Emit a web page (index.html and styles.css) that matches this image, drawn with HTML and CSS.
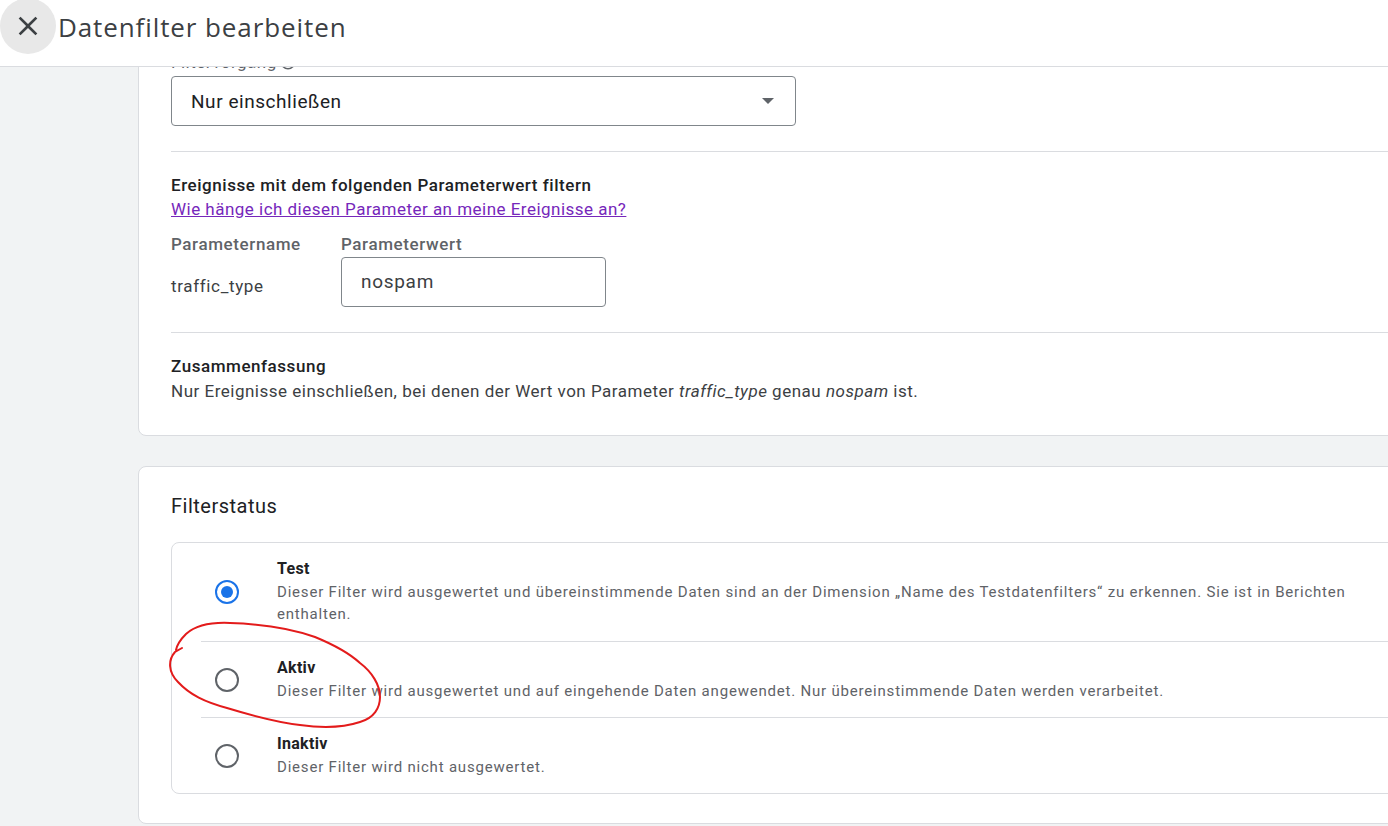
FILE: index.html
```html
<!DOCTYPE html>
<html lang="de">
<head>
<meta charset="utf-8">
<title>Datenfilter bearbeiten</title>
<link rel="stylesheet" href="styles.css">
</head>
<body>
<header class="topbar">
  <button class="close-btn" aria-label="Schließen">
    <svg width="32" height="32" viewBox="0 0 24 24"><path d="M19 6.41L17.59 5 12 10.59 6.41 5 5 6.41 10.59 12 5 17.59 6.41 19 12 13.41 17.59 19 19 17.59 13.41 12z" fill="#3c4043"/></svg>
  </button>
  <h1 class="title">Datenfilter bearbeiten</h1>
</header>
<main class="content">
  <section class="card card-filter">
    <div class="field-label">Filtervorgang<svg class="info" width="18" height="18" viewBox="0 0 24 24"><circle cx="12" cy="12" r="9" fill="none" stroke="#5f6368" stroke-width="2"/><rect x="11" y="10" width="2" height="7" fill="#5f6368"/><rect x="11" y="7" width="2" height="2" fill="#5f6368"/></svg></div>
    <div class="select">
      <span class="select-value">Nur einschließen</span>
      <span class="select-arrow"></span>
    </div>
    <div class="divider"></div>
    <div class="block-title">Ereignisse mit dem folgenden Parameterwert filtern</div>
    <a class="help-link" href="#">Wie hänge ich diesen Parameter an meine Ereignisse an?</a>
    <div class="param-grid">
      <div class="param-head">Parametername</div>
      <div class="param-head">Parameterwert</div>
      <div class="param-name">traffic_type</div>
      <div class="param-input">nospam</div>
    </div>
    <div class="divider"></div>
    <div class="block-title">Zusammenfassung</div>
    <p class="summary">Nur Ereignisse einschließen, bei denen der Wert von Parameter <em>traffic_type</em> genau <em>nospam</em> ist.</p>
  </section>

  <section class="card card-status">
    <h2 class="status-title">Filterstatus</h2>
    <div class="options">
      <div class="option">
        <div class="radio-col"><span class="radio checked"></span></div>
        <div class="option-text">
          <div class="option-title">Test</div>
          <div class="option-desc">Dieser Filter wird ausgewertet und übereinstimmende Daten sind an der Dimension „Name des Testdatenfilters“ zu erkennen. Sie ist in Berichten enthalten.</div>
        </div>
      </div>
      <div class="option">
        <div class="radio-col"><span class="radio"></span></div>
        <div class="option-text">
          <div class="option-title">Aktiv</div>
          <div class="option-desc">Dieser Filter wird ausgewertet und auf eingehende Daten angewendet. Nur übereinstimmende Daten werden verarbeitet.</div>
        </div>
      </div>
      <div class="option">
        <div class="radio-col"><span class="radio"></span></div>
        <div class="option-text">
          <div class="option-title">Inaktiv</div>
          <div class="option-desc">Dieser Filter wird nicht ausgewertet.</div>
        </div>
      </div>
    </div>
  </section>
</main>
<svg class="annotation" width="1388" height="826" viewBox="0 0 1388 826">
  <path d="M182 648 L175 652 C168 660 168 672 178 682 C190 695 205 702 227 708 C250 715 275 722 300 725 C322 728 345 727 360 722 C374 718 380 708 380 697 C380 685 372 672 360 663 C348 652 332 644 315 637 C290 628 262 624 230 623 C208 622 195 626 186 634 C180 640 177 645 176 650" fill="none" stroke="#e31b1b" stroke-width="2" stroke-linecap="round"/>
</svg>
</body>
</html>
```

FILE: styles.css
```css
* { box-sizing: border-box; }

html, body {
  margin: 0;
  padding: 0;
}

body {
  width: 1388px;
  height: 826px;
  overflow: hidden;
  background: #f1f3f4;
  font-family: Roboto, "Liberation Sans", Arial, sans-serif;
  color: #202124;
  position: relative;
}

.topbar {
  height: 67px;
  background: #fff;
  border-bottom: 1px solid #dadce0;
  display: flex;
  align-items: flex-start;
  position: relative;
  z-index: 2;
}

.close-btn {
  width: 56px;
  height: 56px;
  margin: -2px 2px 0 0;
  border: none;
  border-radius: 50%;
  background: #e8e8e8;
  display: flex;
  align-items: center;
  justify-content: center;
  padding: 0;
  flex: none;
}

.title {
  margin: 0;
  font-family: "Open Sans", Roboto, sans-serif;
  font-weight: 400;
  font-size: 26px;
  line-height: 54px;
  color: #3c4043;
  letter-spacing: 0.9px;
}

.content {
  height: 759px;
  overflow: hidden;
  padding-left: 138px;
  position: relative;
  z-index: 1;
}

.card {
  width: 1320px;
  background: #fff;
  border: 1px solid #dadce0;
  border-radius: 8px;
  padding-left: 32px;
}

.card-filter {
  margin-top: -16px;
  padding-top: 0;
  padding-bottom: 34px;
}

.field-label {
  display: flex;
  align-items: center;
  gap: 2px;
  font-size: 17px;
  line-height: 20px;
  height: 20px;
  letter-spacing: 0.5px;
  color: #5f6368;
  margin-bottom: 4px;
}

.select {
  width: 625px;
  height: 50px;
  border: 1px solid #80868b;
  border-radius: 4px;
  display: flex;
  align-items: center;
  justify-content: space-between;
  padding: 0 21px 0 19px;
}

.select-value {
  font-size: 19px;
  letter-spacing: 0.55px;
  color: #202124;
}

.select-arrow {
  width: 0;
  height: 0;
  border-left: 6px solid transparent;
  border-right: 6px solid transparent;
  border-top: 6px solid #5f6368;
}

.divider {
  height: 1px;
  background: #dadce0;
  margin-top: 25px;
}

.block-title {
  margin-top: 23px;
  font-size: 17px;
  line-height: 20px;
  letter-spacing: 0.55px;
  font-weight: 500;
  color: #202124;
}

.help-link {
  display: inline-block;
  font-size: 17px;
  line-height: 28px;
  letter-spacing: 0.48px;
  color: #7627bb;
  text-decoration: underline;
}

.param-grid {
  display: grid;
  grid-template-columns: 170px 265px;
  grid-template-rows: 22px 50px;
  row-gap: 2px;
  margin-top: 10px;
}

.param-head {
  font-size: 17px;
  line-height: 22px;
  letter-spacing: 0.6px;
  font-weight: 500;
  color: #5f6368;
}

.param-name {
  font-size: 17px;
  letter-spacing: 0.65px;
  color: #3c4043;
  align-self: center;
  padding-top: 8px;
}

.param-input {
  border: 1px solid #80868b;
  border-radius: 4px;
  font-size: 19px;
  letter-spacing: 0.7px;
  color: #3c4043;
  padding: 0 19px 2px;
  display: flex;
  align-items: center;
}

.summary {
  margin: 5px 0 0;
  font-size: 17px;
  line-height: 20px;
  letter-spacing: 0.5px;
  color: #3c4043;
}

.summary em { font-style: italic; }

.card-status {
  margin-top: 30px;
  padding-top: 27px;
  padding-bottom: 29px;
}

.status-title {
  margin: 0 0 24px;
  font-size: 20px;
  line-height: 24px;
  letter-spacing: 0.5px;
  font-weight: 400;
  color: #202124;
}

.options {
  border: 1px solid #dadce0;
  border-radius: 8px;
  width: 1255px;
}

.option {
  display: flex;
  align-items: center;
  margin-left: 29px;
  padding: 16px 24px 15px 0;
}

.option:first-child {
  margin-left: 0;
  padding-left: 29px;
  padding-bottom: 16px;
}

.option + .option {
  border-top: 1px solid #dadce0;
}

.radio-col {
  width: 76px;
  flex: none;
  padding-left: 14px;
}

.radio {
  display: block;
  width: 24px;
  height: 24px;
  border: 2px solid #5f6368;
  border-radius: 50%;
  position: relative;
}

.radio.checked {
  border-color: #1a73e8;
}

.radio.checked::after {
  content: "";
  position: absolute;
  left: 4px;
  top: 4px;
  width: 12px;
  height: 12px;
  border-radius: 50%;
  background: #1a73e8;
}

.option-text { flex: 1; }

.option-title {
  font-size: 16px;
  line-height: 20px;
  letter-spacing: 0.3px;
  font-weight: 700;
  color: #202124;
}

.option-desc {
  margin-top: 2px;
  font-size: 15px;
  line-height: 22px;
  letter-spacing: 0.8px;
  color: #5f6368;
}

.annotation {
  position: absolute;
  left: 0;
  top: 0;
  pointer-events: none;
  z-index: 3;
}
```
